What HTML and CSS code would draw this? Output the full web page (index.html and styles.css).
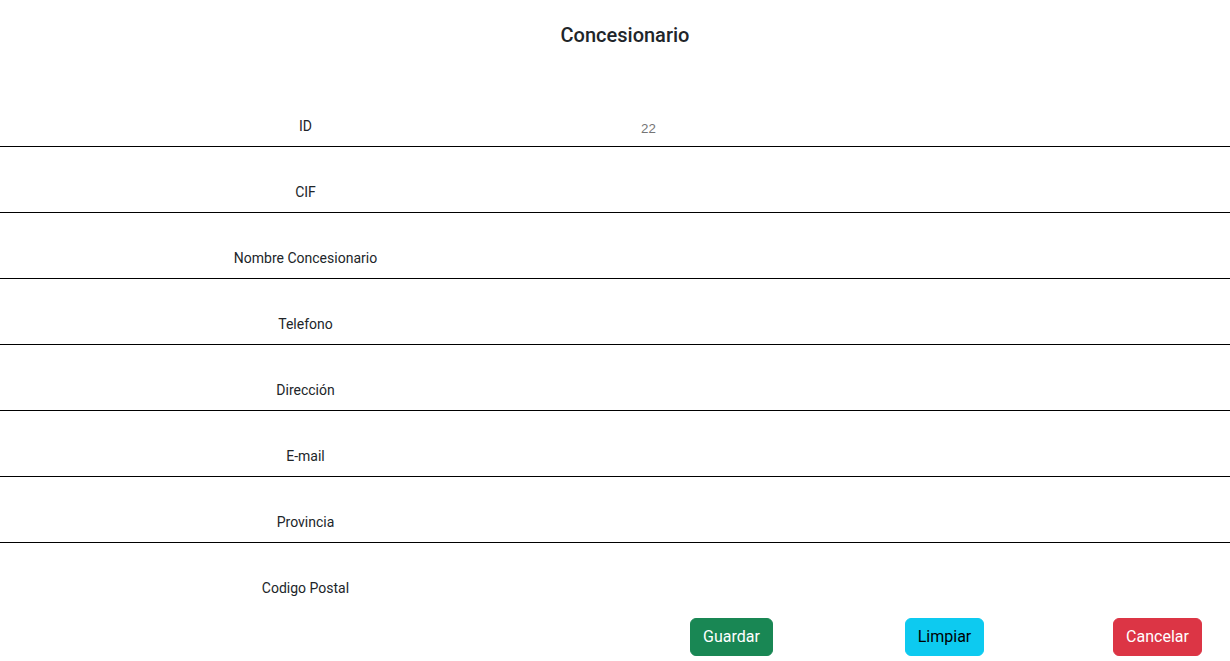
FILE: index.html
```html
<!DOCTYPE html>
<html lang="es">
<head>
<meta charset="utf-8">
<title>Concesionario</title>
<link rel="stylesheet" href="styles.css">
</head>
<body>
<h1 class="title">Concesionario</h1>
<form class="form">
  <div class="row"><label class="label">ID</label><input class="field" placeholder="22"></div>
  <div class="row"><label class="label">CIF</label><input class="field"></div>
  <div class="row"><label class="label">Nombre Concesionario</label><input class="field"></div>
  <div class="row"><label class="label">Telefono</label><input class="field"></div>
  <div class="row"><label class="label">Dirección</label><input class="field"></div>
  <div class="row"><label class="label">E-mail</label><input class="field"></div>
  <div class="row"><label class="label">Provincia</label><input class="field"></div>
  <div class="row last"><label class="label">Codigo Postal</label><input class="field"></div>
  <div class="actions">
    <div class="cell"><button type="button" class="btn btn-success">Guardar</button></div>
    <div class="cell"><button type="button" class="btn btn-info">Limpiar</button></div>
    <div class="cell"><button type="button" class="btn btn-danger">Cancelar</button></div>
  </div>
</form>
</body>
</html>
```
FILE: styles.css
```css
html, body {
  margin: 0;
  overflow-x: hidden;
}
body {
  font-family: Roboto, "Liberation Sans", sans-serif;
  color: #212529;
  background: #fff;
}
.title {
  margin: 0;
  padding: 23px 0 0 20px;
  height: 58px;
  font-size: 20px;
  font-weight: 500;
  line-height: 24px;
  text-align: center;
}
.row {
  display: grid;
  grid-template-columns: 611px 1fr;
  align-items: end;
  height: 66px;
  padding-bottom: 9px;
  box-sizing: border-box;
  border-bottom: 1px solid #000;
}
.row.last {
  border-bottom: none;
  padding-bottom: 10px;
}
.label {
  font-size: 14px;
  line-height: 21px;
  text-align: center;
}
.field {
  border: none;
  outline: none;
  background: transparent;
  font-family: "Liberation Sans", Arial, sans-serif;
  font-size: 13.333px;
  padding: 0 0 0 30px;
  margin: 0;
  height: 18px;
  width: 300px;
}
.field::placeholder {
  color: #757575;
}
.actions {
  display: grid;
  grid-template-columns: repeat(3, 213px);
  padding-left: 625px;
  margin-top: 9px;
  width: 639px;
}
.cell {
  display: flex;
  justify-content: center;
}
.btn {
  font-family: Roboto, "Liberation Sans", sans-serif;
  font-size: 16px;
  line-height: 24px;
  padding: 6px 12px;
  border: 1px solid transparent;
  border-radius: 6px;
  cursor: pointer;
}
.btn-success {
  background: #198754;
  border-color: #198754;
  color: #fff;
}
.btn-info {
  background: #0dcaf0;
  border-color: #0dcaf0;
  color: #000;
}
.btn-danger {
  background: #dc3545;
  border-color: #dc3545;
  color: #fff;
}
```
